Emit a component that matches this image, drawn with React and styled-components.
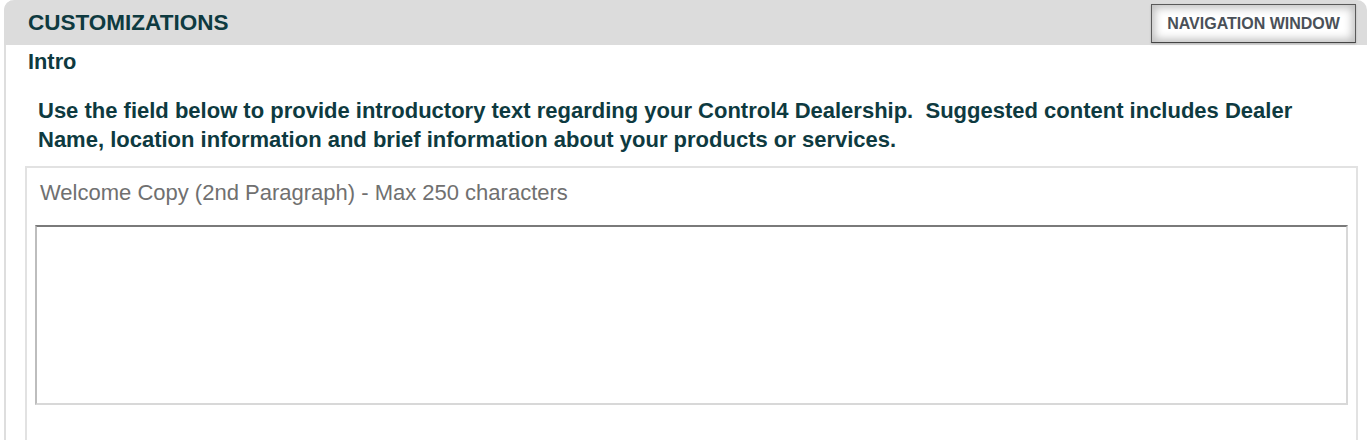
import React from 'react';
import styled, { createGlobalStyle } from 'styled-components';

const GlobalStyle = createGlobalStyle`
  body {
    margin: 0;
    background: #ffffff;
    font-family: "Liberation Sans", Arial, Helvetica, sans-serif;
  }
`;

const Page = styled.div`
  width: 1372px;
  height: 440px;
  overflow: hidden;
  padding-left: 4px;
  box-sizing: border-box;
`;

const Panel = styled.div`
  width: 1363px;
  min-height: 460px;
  background: #ffffff;
  border-left: 2px solid #dedede;
  border-radius: 10px 10px 0 0;
  box-sizing: border-box;
`;

const Header = styled.div`
  height: 45px;
  display: flex;
  align-items: center;
  justify-content: space-between;
  padding: 0 11px 0 24px;
  background: #dcdcdc;
  border-radius: 10px 10px 0 0;
  margin-left: -2px;
`;

const Title = styled.h1`
  margin: 0;
  font-size: 22.5px;
  font-weight: 700;
  color: #0e3a40;
`;

const NavButton = styled.button`
  align-self: flex-start;
  width: 205px;
  height: 39px;
  margin-top: 4px;
  border: 1px solid #5a5a5a;
  border-bottom-color: #444;
  background: #ffffff;
  box-shadow: inset 0 0 8px 3px rgba(0, 0, 0, 0.25), 0 1px 2px rgba(0, 0, 0, 0.18);
  font-family: inherit;
  font-size: 16px;
  font-weight: 700;
  color: #4a5058;
  padding: 0;
  cursor: pointer;
`;

const Body = styled.div`
  padding: 5px 0 0 22px;
`;

const SectionTitle = styled.h2`
  margin: 0;
  font-size: 21.8px;
  font-weight: 700;
  color: #0e3a40;
  line-height: 24px;
`;

const Instructions = styled.p`
  margin: 22px 0 0 10px;
  width: 1290px;
  font-size: 22px;
  font-weight: 700;
  line-height: 29px;
  color: #0e3a40;
`;

const FieldBox = styled.div`
  margin: 12px 0 0 -3px;
  width: 1333px;
  height: 300px;
  border: 2px solid #e2e2e2;
  box-sizing: border-box;
  padding: 13px 8px 0 8px;
`;

const FieldLabel = styled.label`
  display: block;
  padding-left: 5px;
  font-size: 22px;
  color: #707070;
  line-height: 24px;
`;

const TextArea = styled.textarea`
  display: block;
  margin-top: 20px;
  width: 1313px;
  height: 180px;
  box-sizing: border-box;
  border: 2px solid #d8d8d8;
  border-top-color: #7a7a7a;
  border-left-color: #bdbdbd;
  resize: none;
  font-family: inherit;
  font-size: 16px;
  padding: 6px;
  outline: none;
`;

export default function App() {
  return (
    <Page>
      <GlobalStyle />
      <Panel>
        <Header>
          <Title>CUSTOMIZATIONS</Title>
          <NavButton>NAVIGATION WINDOW</NavButton>
        </Header>
        <Body>
          <SectionTitle>Intro</SectionTitle>
          <Instructions>
            Use the field below to provide introductory text regarding your Control4 Dealership.&nbsp; Suggested content includes Dealer Name, location information and brief information about your products or services.
          </Instructions>
          <FieldBox>
            <FieldLabel>Welcome Copy (2nd Paragraph) - Max 250 characters</FieldLabel>
            <TextArea />
          </FieldBox>
        </Body>
      </Panel>
    </Page>
  );
}
